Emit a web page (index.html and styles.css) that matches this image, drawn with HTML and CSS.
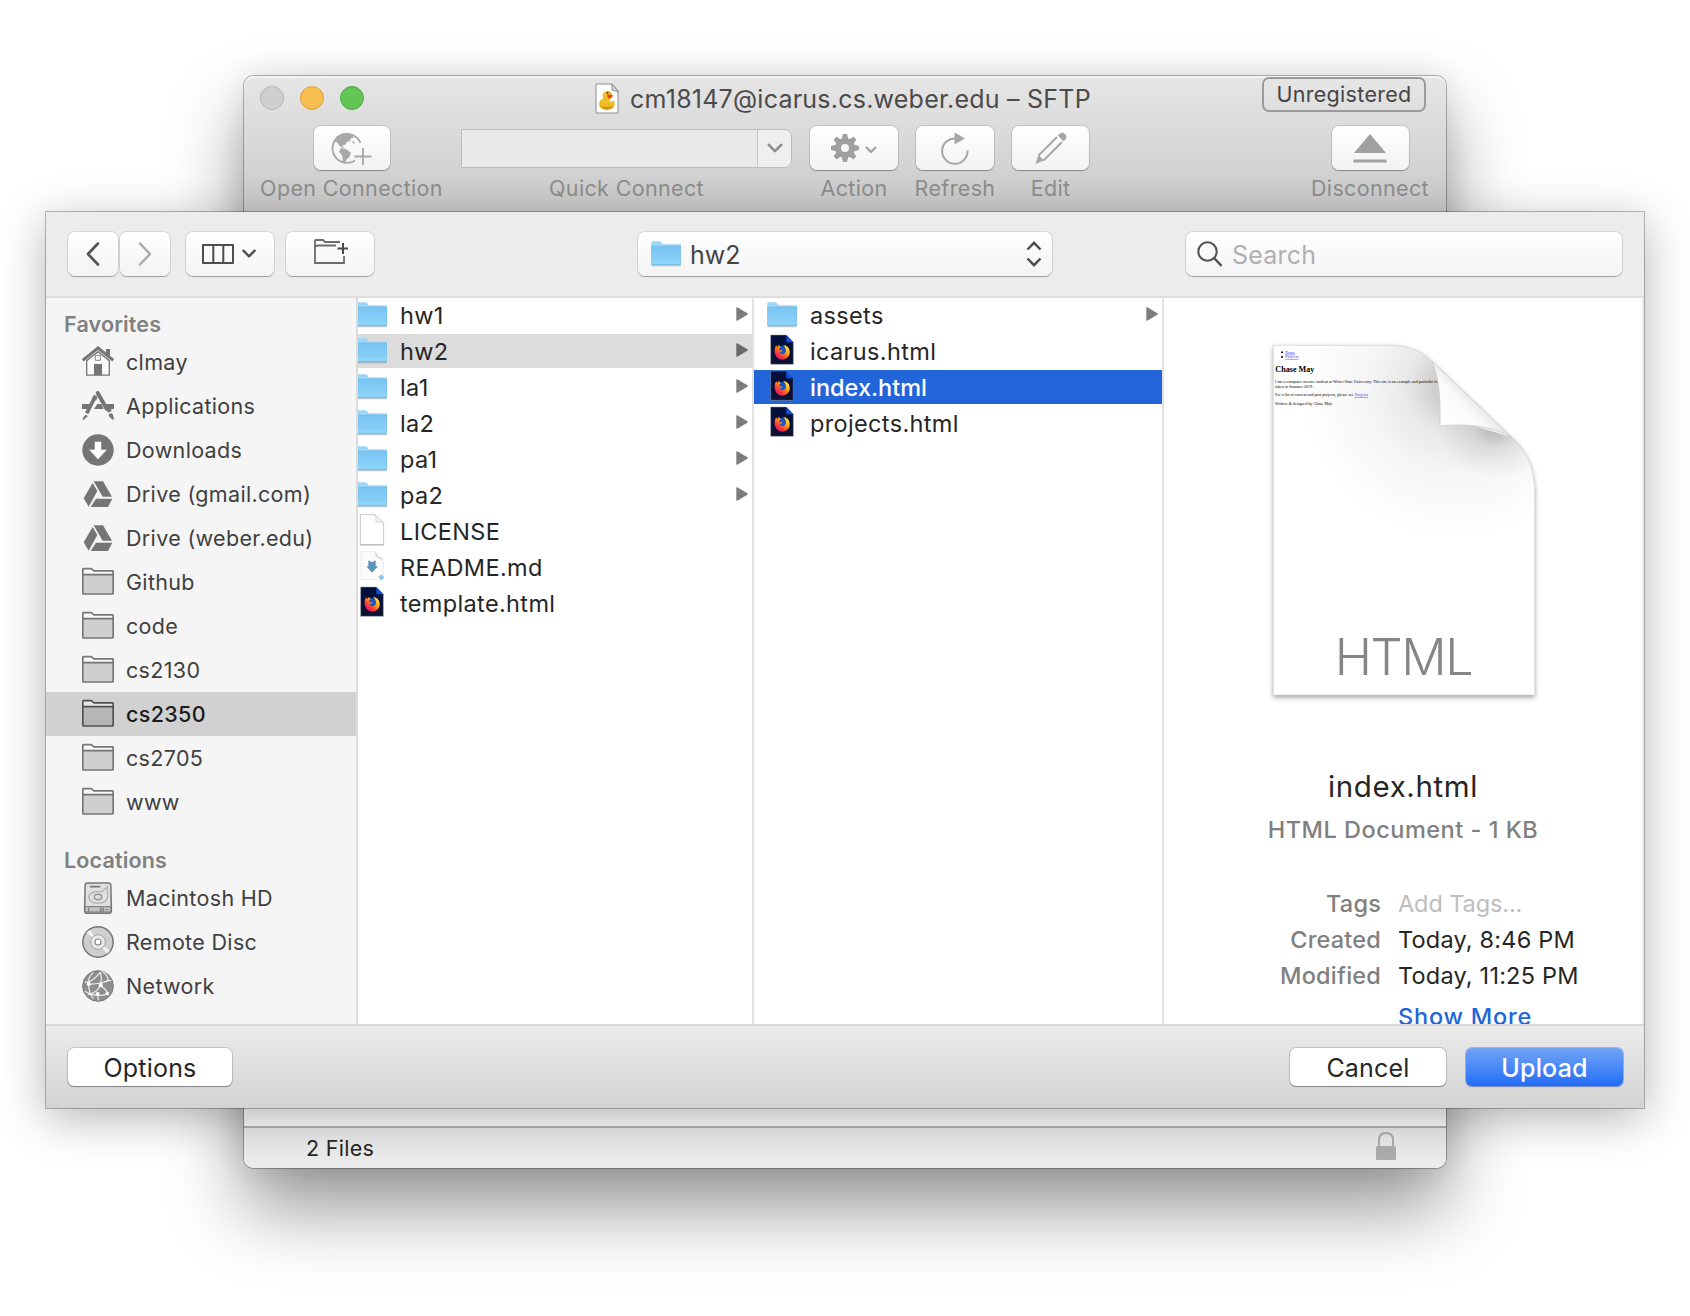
FILE: index.html
```html
<!DOCTYPE html>
<html lang="en">
<head>
<meta charset="utf-8">
<title>SFTP upload</title>
<link rel="stylesheet" href="styles.css">
</head>
<body>
<svg class="defs" width="0" height="0" aria-hidden="true">
  <defs>
    <linearGradient id="gFolder" x1="0" y1="0" x2="0" y2="1"><stop offset="0" stop-color="#79c4f1"/><stop offset="1" stop-color="#8dd3f9"/></linearGradient>
    <linearGradient id="gFox" x1=".9" y1=".1" x2=".2" y2=".9"><stop offset="0" stop-color="#fff04a"/><stop offset=".4" stop-color="#ff9a1c"/><stop offset=".7" stop-color="#ff4330"/><stop offset="1" stop-color="#e3136b"/></linearGradient>
    <linearGradient id="gNavy" x1="0" y1="0" x2="0" y2="1"><stop offset="0" stop-color="#020f3e"/><stop offset="1" stop-color="#0c1230"/></linearGradient>
    <symbol id="folder" viewBox="0 0 90 102">
      <path d="M2 86.500H88" stroke="#000" stroke-opacity=".22" stroke-width="3"/>
      <path d="M1 16q0-3 3-3h22q3 0 4.500 2.500l2.500 4q1.500 2.500 4.500 2.500H87q3 0 3 3v10H1z" fill="#9ad7f8"/>
      <path d="M1 30q0-2 2-2h85q2 0 2 2v51q0 3-3 3H4q-3 0-3-3z" fill="url(#gFolder)"/>
      <path d="M1 27.500H90" stroke="#64afdd" stroke-width="1.500"/>
      <path d="M2 75H89" stroke="#a3ddfb" stroke-width="1.500"/>
      <path d="M1.500 83.500H89.500" stroke="#55a0cc" stroke-width="2"/>
      <path d="M1 25v58M89.500 25v58" stroke="#6fb9e2" stroke-width="1.500"/>
    </symbol>
    <symbol id="firefox" viewBox="0 0 90 102">
      <path d="M11 3h47l21 22v66H11z" fill="url(#gNavy)" stroke="#9a9ca8" stroke-width="1.500"/>
      <path d="M58 3l21 22H60q-2 0-2-2z" fill="#0a52dc"/>
      <circle cx="45" cy="53" r="17" fill="#1c57c8"/>
      <path d="M23 45q1-7 5-11 1 3 3 5 2-4 6-6 0 4 4 7-5 4-4 9 5-2 9 1-3 5-9 5 4 7 12 5 9-3 8-13-1-8-9-14 17 2 20 18 2 14-9 22-13 8-26 0-12-9-10-28z" fill="url(#gFox)"/>
      <path d="M38 43q4-4 9-2l-3 5q-4 3-7 3z" fill="#1c4fb8"/>
    </symbol>
    <symbol id="doc" viewBox="0 0 90 102">
      <path d="M10 1h42l28 27v64H10z" fill="#fff" stroke="#bdbdbd" stroke-width="2.500" stroke-linejoin="round"/>
      <path d="M52 1l28 27q-10-7-23-4 1-14-5-23z" fill="#f6f6f6" stroke="#bdbdbd" stroke-width="1.800"/>
      <path d="M10 93H80" stroke="#aaa" stroke-width="2.500"/>
    </symbol>
    <symbol id="md" viewBox="0 0 90 102">
      <path d="M12 4h40l27 25v60H12z" fill="#fcfcfc" stroke="#e2e2e2" stroke-width="2"/>
      <path d="M52 4l27 25-17-5-8-6z" fill="#ececec"/>
      <path d="M55 9l7 13 16 6" stroke="#bbb" stroke-width="1.500" fill="none"/>
      <path d="M34 31l11 6 11-6v18h7L45 68 28 49h6z" fill="#5b95ba"/>
      <path d="M73 73l9 9-9 9-9-9z" fill="#8fc3ef"/>
    </symbol>
    <symbol id="arrow" viewBox="0 0 36 42"><path d="M1 3q0-3 3-2l30 18q3 2 0 4L4 41q-3 1-3-2z"/></symbol>
    <symbol id="sfolder" viewBox="0 0 96 96">
      <path d="M2 84V10q0-2.500 2.500-2.500H26q2.500 0 4 2l3 4q1.500 2 4 2h55q2.500 0 2.500 2.500V84z" fill="#fff" fill-opacity=".45"/>
      <path d="M2 26H94V84H2z" fill="currentColor" fill-opacity=".32"/>
      <path d="M3 26H93M2.500 82V10q0-2 2-2H27q2 0 3.500 2l3 2.500q1.500 2 3.500 2h54.500q2 0 2 2V82q0 2-2 2h-87q-2 0-2-2z" fill="none" stroke="currentColor" stroke-width="5" stroke-linejoin="round"/>
    </symbol>
    <symbol id="drive" viewBox="0 0 96 96">
      <path d="M35 10H63L90 56H62z M32 15L46 39 20 86 5 61z M42 62H91L78 87H26z" fill="currentColor"/>
    </symbol>
    <symbol id="chev" viewBox="0 0 42 30"><path d="M4 5L21 22 38 5" fill="none" stroke="currentColor" stroke-width="7" stroke-linecap="round" stroke-linejoin="round"/></symbol>
  </defs>
</svg>

<section class="window">
  <header class="titlebar">
    <div class="lights"><i class="light"></i><i class="light amber"></i><i class="light green"></i></div>
    <div class="title">
      <svg width="24" height="31" viewBox="0 0 24 31">
        <path d="M1 1h16l6 7v22H1z" fill="#fdfdfd" stroke="#8e8e8e"/><path d="M17 1l6 7.500-6-1.500z" fill="#ddd" stroke="#777" stroke-width=".8"/>
        <path d="M5 17.500q-2 5 .5 7.500 6 3.500 12 .5 3.500-3 1.500-8-3 2-5 .5 4-3.500 2.500-8-2.500-3.500-6.500-1.500-3.500 2-2 6 .5 1.500-3 3z" fill="#eebc26"/>
        <path d="M6 22.500q6 3 12.500 0-2 4-7 4-4.500-.500-5.500-4z" fill="#d09310"/>
        <path d="M12 12q4-1 6 .5-1 3-5 3z" fill="#e14c1d"/><circle cx="12.500" cy="10" r="1" fill="#4a3210"/>
      </svg>
      <span class="title-text">cm18147@icarus.cs.weber.edu – SFTP</span>
    </div>
    <span class="badge"><span>Unregistered</span></span>
  </header>
  <div class="tools">
    <div class="tool tool-open">
      <span class="tool-btn"><svg width="46" height="36" viewBox="0 0 46 36">
        <path d="M31.500 13A14.500 14.500 0 1 0 26 30.500" fill="none" stroke="#a9a9a9" stroke-width="1.900"/>
        <path d="M8 6q6-4 12-3l-1 2 4 0 2 3-3 0-1 3-3 1-2 3-3 0 2 3q-5-1-7-6-3 0-3-1z M22 11l4 1-1 2z M12 18l5 1 5 4q-1 4-4 6l-2 4-2-1-1-7-3-3z" fill="#a9a9a9"/>
        <path d="M34 18v17M25.500 26.500h17" stroke="#a9a9a9" stroke-width="1.900"/></svg></span>
      <span class="tool-label">Open Connection</span>
    </div>
    <div class="tool tool-quick">
      <span class="combo"><span class="combo-drop"><svg class="ico-mid" width="16" height="11"><use href="#chev"/></svg></span></span>
      <span class="tool-label">Quick Connect</span>
    </div>
    <div class="tool tool-action">
      <span class="tool-btn"><svg width="46" height="30" viewBox="0 0 46 30">
        <g fill="#a0a0a0"><path id="teeth" d="M12 1h4l2 8h-8zM12 29h4l2-8h-8z"/><use href="#teeth" transform="rotate(45 14 15)"/><use href="#teeth" transform="rotate(90 14 15)"/><use href="#teeth" transform="rotate(135 14 15)"/></g>
        <circle cx="14" cy="15" r="7" fill="none" stroke="#a0a0a0" stroke-width="6"/>
        <path d="M35 14l5 5 5-5" fill="none" stroke="#a0a0a0" stroke-width="2.200"/></svg></span>
      <span class="tool-label">Action</span>
    </div>
    <div class="tool tool-refresh">
      <span class="tool-btn"><svg width="30" height="34" viewBox="0 0 30 34">
        <path d="M16 7.500A12.700 12.700 0 1 0 27.500 19.500" fill="none" stroke="#a6a6a6" stroke-width="2"/><path d="M14.500 1.500L25 7.500 14.500 13.500z" fill="#a6a6a6"/></svg></span>
      <span class="tool-label">Refresh</span>
    </div>
    <div class="tool tool-edit">
      <span class="tool-btn"><svg width="34" height="34" viewBox="0 0 34 34">
        <path d="M23 6L4.500 24.500M28 11L9.500 29.500" stroke="#a6a6a6" stroke-width="1.900" fill="none"/>
        <path d="M4.500 24L10 29.500 1.500 33z M24 4.500q3-4.500 7-1.500 3.500 4-1.500 7.500z" fill="#a6a6a6"/></svg></span>
      <span class="tool-label">Edit</span>
    </div>
    <div class="tool tool-disc">
      <span class="tool-btn"><svg width="34" height="30" viewBox="0 0 34 30"><path d="M17 1L33 20H1z M.500 26.500h33v3H.500z" fill="#a0a0a0"/></svg></span>
      <span class="tool-label">Disconnect</span>
    </div>
  </div>
  <footer class="status">
    <span class="status-text">2 Files</span>
    <svg class="lock" width="20" height="28" viewBox="0 0 20 28"><path d="M3 15V8q0-7 7-7t7 7v7" fill="none" stroke="#aeaeae" stroke-width="2"/><rect y="14" width="20" height="14" rx="1.500" fill="#aeaeae"/></svg>
  </footer>
</section>

<section class="sheet">
  <header class="bar">
    <div class="nav">
      <span class="btn"><svg width="14" height="24" viewBox="0 0 14 24"><path d="M12 1.500L2 12l10 10.500" fill="none" stroke="#555" stroke-width="2.700" stroke-linecap="round" stroke-linejoin="round"/></svg></span>
      <span class="btn"><svg width="14" height="24" viewBox="0 0 14 24"><path d="M2 1.500L12 12 2 22.500" fill="none" stroke="#ababab" stroke-width="2.500" stroke-linecap="round" stroke-linejoin="round"/></svg></span>
    </div>
    <span class="btn view-btn"><svg width="32" height="20" viewBox="0 0 32 20"><path d="M1 1h30v18H1zM11.300 1v18M21.300 1v18" fill="none" stroke="#4d4d4d" stroke-width="2" stroke-linejoin="round"/></svg><svg class="ico-dark" width="14" height="10"><use href="#chev"/></svg></span>
    <span class="btn new-btn"><svg width="34" height="25" viewBox="0 0 34 25"><path d="M30 17v7H1V2q0-1 1-1h7l2 2h15M2 8q0-1.500 2-1.500h18" fill="none" stroke="#6b6b6b" stroke-width="1.800"/><path d="M29 4v11M23.500 9.500h11" stroke="#4a4a4a" stroke-width="2"/></svg></span>
    <span class="btn path-btn"><svg width="30" height="34"><use href="#folder"/></svg><span class="path-text">hw2</span><svg class="updown" width="16" height="26" viewBox="0 0 16 26"><path d="M1.500 8.500L8 1.800l6.500 6.700M1.500 17.500L8 24.200l6.500-6.700" fill="none" stroke="#4d4d4d" stroke-width="2.500"/></svg></span>
    <span class="btn search"><svg width="26" height="26" viewBox="0 0 26 26"><circle cx="10.500" cy="10.500" r="9.200" fill="none" stroke="#505050" stroke-width="2"/><path d="M17 17l7.500 7.800" stroke="#505050" stroke-width="2.400"/></svg><span class="search-text">Search</span></span>
  </header>

  <div class="browser">
    <nav class="sidebar">
      <h2>Favorites</h2>
      <ul>
        <li><svg viewBox="0 0 96 96"><path d="M14 44V87.500H82V44L48 17z" fill="#fff" fill-opacity=".5" stroke="currentColor" stroke-width="4"/><path d="M2 43L48 6 94 43" fill="none" stroke="currentColor" stroke-width="9"/><path d="M72 9h12v22l-12-9z M36 54h24v34H36z" fill="currentColor"/><path d="M40 28h15v15H40z" fill="none" stroke="currentColor" stroke-width="2.500"/></svg><span>clmay</span></li>
        <li><svg viewBox="0 0 96 96"><path d="M0 42H24L16 57H0z M46 42h12l7 15H36z M70 42h26v15H80z" fill="currentColor"/><path d="M41 17L14 70" stroke="currentColor" stroke-width="11"/><path d="M47 9L74 56" stroke="currentColor" stroke-width="12" stroke-linecap="round"/><path d="M74 59l11-5 4 9-11 5z M81 72q8-6 12 2 3 8 2 17-7-4-12-9-4-5-2-10z M10 74l8 4-16 14q0-10 8-18z" fill="currentColor"/><circle cx="38" cy="25" r="7" fill="currentColor"/></svg><span>Applications</span></li>
        <li><svg viewBox="0 0 96 96"><circle cx="48" cy="48" r="47" fill="currentColor"/><path d="M37 22H59V46H77L48 77 19 46H37z" fill="#fff" stroke="#6a6a6a" stroke-width="2"/></svg><span>Downloads</span></li>
        <li><svg><use href="#drive"/></svg><span>Drive (gmail.com)</span></li>
        <li><svg><use href="#drive"/></svg><span>Drive (weber.edu)</span></li>
        <li><svg><use href="#sfolder"/></svg><span>Github</span></li>
        <li><svg><use href="#sfolder"/></svg><span>code</span></li>
        <li><svg><use href="#sfolder"/></svg><span>cs2130</span></li>
        <li class="current"><svg><use href="#sfolder"/></svg><span>cs2350</span></li>
        <li><svg><use href="#sfolder"/></svg><span>cs2705</span></li>
        <li><svg><use href="#sfolder"/></svg><span>www</span></li>
      </ul>
      <h2 class="second">Locations</h2>
      <ul>
        <li><svg viewBox="0 0 96 96"><path d="M16 3H80q6 0 6.500 6L88 74v14q0 6-6 6H14q-6 0-6-6V74L9.500 9q.5-6 6.500-6z" fill="#e0e0e0" stroke="currentColor" stroke-width="4.500"/><path d="M9 74H87V90H9z" fill="#c4c4c4" stroke="currentColor" stroke-width="3"/><path d="M24 14H55" stroke="currentColor" stroke-width="5"/><path d="M76 14L60 29Q22 26 20 46q3 18 30 18 27-2 27-21z" fill="none" stroke="#b2b2b2" stroke-width="4"/><ellipse cx="48" cy="45" rx="11" ry="8" fill="none" stroke="#999" stroke-width="4.500"/><path d="M20 77v12M55 77v12M60 77v12M65 77v12M72 83h6" stroke="currentColor" stroke-width="3"/></svg><span>Macintosh HD</span></li>
        <li><svg viewBox="0 0 96 96"><circle cx="48" cy="48" r="45.500" fill="#cfcfcf" stroke="currentColor" stroke-width="4.500"/><path d="M48 48L14 20 24 11zM48 48L84 74 75 83z" fill="#f2f2f2"/><circle cx="48" cy="48" r="22" fill="#e8e8e8" stroke="#999" stroke-width="2.500"/><circle cx="48" cy="48" r="9" fill="#fff" stroke="#8a8a8a" stroke-width="3.500"/></svg><span>Remote Disc</span></li>
        <li><svg viewBox="0 0 96 96"><circle cx="48" cy="48" r="46" fill="#8e8e8e" stroke="#777" stroke-width="3"/><g fill="none" stroke="#f1f1f1" stroke-width="3.500"><path d="M8 35q16 8 47-28M55 6q6 22 0 40-10 24-38 28M20 42Q18 18 34 8M20 42q0 26 14 44M20 42q28 2 68-12M55 46q22 16 24 30M8 64q36 20 68 8M47 72l2 20M60 4q18 10 18 28-20 4-24 16"/></g><g fill="#fff"><circle cx="20" cy="42" r="6"/><circle cx="56" cy="46" r="6"/><circle cx="47" cy="72" r="6"/><circle cx="76" cy="70" r="5"/></g></svg><span>Network</span></li>
      </ul>
    </nav>

    <ul class="col col-a">
      <li><svg class="fi"><use href="#folder"/></svg><span>hw1</span><svg class="ar"><use href="#arrow"/></svg></li>
      <li class="trail"><svg class="fi"><use href="#folder"/></svg><span>hw2</span><svg class="ar"><use href="#arrow"/></svg></li>
      <li><svg class="fi"><use href="#folder"/></svg><span>la1</span><svg class="ar"><use href="#arrow"/></svg></li>
      <li><svg class="fi"><use href="#folder"/></svg><span>la2</span><svg class="ar"><use href="#arrow"/></svg></li>
      <li><svg class="fi"><use href="#folder"/></svg><span>pa1</span><svg class="ar"><use href="#arrow"/></svg></li>
      <li><svg class="fi"><use href="#folder"/></svg><span>pa2</span><svg class="ar"><use href="#arrow"/></svg></li>
      <li><svg class="fi"><use href="#doc"/></svg><span>LICENSE</span></li>
      <li><svg class="fi"><use href="#md"/></svg><span>README.md</span></li>
      <li><svg class="fi"><use href="#firefox"/></svg><span>template.html</span></li>
    </ul>

    <ul class="col col-b">
      <li><svg class="fi"><use href="#folder"/></svg><span>assets</span><svg class="ar"><use href="#arrow"/></svg></li>
      <li><svg class="fi"><use href="#firefox"/></svg><span>icarus.html</span></li>
      <li class="selected"><svg class="fi"><use href="#firefox"/></svg><span>index.html</span></li>
      <li><svg class="fi"><use href="#firefox"/></svg><span>projects.html</span></li>
    </ul>

    <aside class="preview">
      <svg class="page" width="320" height="400" viewBox="0 0 960 1200">
        <defs>
          <radialGradient id="pgShade" gradientUnits="userSpaceOnUse" cx="640" cy="200" r="460"><stop offset="0" stop-color="#c2c2c2"/><stop offset=".15" stop-color="#d2d2d2"/><stop offset=".3" stop-color="#e8e8e8"/><stop offset=".55" stop-color="#f5f5f5"/><stop offset="1" stop-color="#fff"/></radialGradient>
          <linearGradient id="pgCurl" gradientUnits="userSpaceOnUse" x1="610" y1="300" x2="700" y2="215"><stop offset="0" stop-color="#fff"/><stop offset=".6" stop-color="#fafafa"/><stop offset="1" stop-color="#e2e2e2"/></linearGradient>
          <radialGradient id="pgUnder" gradientUnits="userSpaceOnUse" cx="0" cy="0" r="1" gradientTransform="translate(765 325) rotate(14) scale(175 150)"><stop offset="0" stop-color="#000" stop-opacity=".24"/><stop offset=".4" stop-color="#000" stop-opacity=".09"/><stop offset="1" stop-color="#000" stop-opacity="0"/></radialGradient>
          <filter id="pgDrop" x="-10%" y="-10%" width="120%" height="120%"><feDropShadow dx="0" dy="7" stdDeviation="8" flood-color="#000" flood-opacity=".38"/></filter>
        </defs>
        <path d="M100 76H455Q530 76 574 122L815 352Q884 410 884 520V1125H100z" fill="#fff" filter="url(#pgDrop)"/>
        <path d="M100 76H455Q530 76 574 122L815 352Q884 410 884 520V1125H100z" fill="url(#pgShade)" stroke="#cfcfcf" stroke-width="2"/>
        <g class="page-text">
          <circle cx="126" cy="97" r="3"/><circle cx="126" cy="111" r="3"/>
          <text class="lk" x="136" y="101" textLength="30" lengthAdjust="spacingAndGlyphs">Home</text><text class="lk" x="136" y="115" textLength="40" lengthAdjust="spacingAndGlyphs">Projects</text>
          <text class="page-h" x="106" y="155" textLength="117" lengthAdjust="spacingAndGlyphs">Chase May</text>
          <text x="105" y="189" textLength="492" lengthAdjust="spacingAndGlyphs">I am a computer science student at Weber State University. This site is an example and portfolio for</text>
          <text x="105" y="203" textLength="114" lengthAdjust="spacingAndGlyphs">taken in Summer 2019.</text>
          <text x="105" y="229" textLength="236" lengthAdjust="spacingAndGlyphs">For a list of current and past projects, please see</text><text class="lk" x="344" y="229" textLength="40" lengthAdjust="spacingAndGlyphs">Projects</text>
          <text x="105" y="255" textLength="171" lengthAdjust="spacingAndGlyphs">Written &amp; designed by Chase May</text>
        </g>
        <path d="M560 317H700L815 352Q884 410 884 520V560H560z" fill="url(#pgUnder)"/>
        <path d="M574 122L815 352Q740 306 600 317Q604 180 574 122z" fill="url(#pgCurl)" stroke="#c4c4c4" stroke-width="2"/>
        <text class="page-kind" x="284" y="1065" textLength="417">HTML</text>
      </svg>
      <div class="file-name">index.html</div>
      <div class="file-kind">HTML Document - 1 KB</div>
      <dl class="meta">
        <dt>Tags</dt><dd class="muted">Add Tags...</dd>
        <dt>Created</dt><dd>Today, 8:46 PM</dd>
        <dt>Modified</dt><dd>Today, 11:25 PM</dd>
      </dl>
      <div class="more"><span>Show More</span></div>
    </aside>
  </div>

  <footer class="actions">
    <span class="push options"><span>Options</span></span>
    <span class="push cancel"><span>Cancel</span></span>
    <span class="push primary"><span>Upload</span></span>
  </footer>
</section>
</body>
</html>
```
FILE: styles.css
```css
* { box-sizing: border-box; }
body {
  margin: 0;
  position: relative;
  width: 1690px;
  height: 1316px;
  overflow: hidden;
  background: #fff;
  color: #262626;
  font-family: Inter, "Liberation Sans", sans-serif;
}
ul, dl, dd, h2 { margin: 0; padding: 0; list-style: none; }
svg { display: block; flex: none; }
.defs { position: absolute; }

/* Browser window behind the sheet */
.window {
  position: absolute;
  left: 244px;
  top: 76px;
  width: 1202px;
  height: 1092px;
  display: flex;
  flex-direction: column;
  border-radius: 10px;
  overflow: hidden;
  background: linear-gradient(#e6e6e6, #cacaca 136px, #fff 136px);
  box-shadow: inset 0 2px 0 rgba(255,255,255,.55), 0 0 0 1px rgba(0,0,0,.27), 0 40px 76px rgba(0,0,0,.42), 0 0 30px rgba(0,0,0,.1);
}
.titlebar {
  height: 45px;
  display: grid;
  grid-template-columns: 1fr auto 1fr;
  align-items: center;
  padding: 0 20px 0 16px;
}
.lights { display: flex; gap: 16px; margin-top: -1px; }
.light { width: 24px; height: 24px; border-radius: 50%; background: #cfcfcf; border: 1px solid #b4b4b4; }
.light.amber { background: #f6be4f; border-color: #dea13a; }
.light.green { background: #62c655; border-color: #4eaa41; }
.title { display: flex; align-items: center; gap: 11px; }
.title svg { margin-top: -1px; }
.title-text { font-size: 25px; letter-spacing: .23px; color: #4b4b4b; white-space: nowrap; }
.badge {
  justify-self: end;
  align-self: start;
  margin-top: 1px;
  width: 164px;
  height: 35px;
  border: 2px solid #9a9a9a;
  border-radius: 7px;
  font-size: 21.500px;
  letter-spacing: .3px;
  line-height: 31px;
  text-align: center;
  color: #454545;
}
.tools { display: flex; gap: 18px; padding: 5px 16px 0; flex: 1; }
.tool { display: flex; flex-direction: column; align-items: center; }
.tool-btn {
  width: 100%;
  height: 44px;
  display: flex;
  align-items: center;
  justify-content: center;
  border-radius: 7px;
  background: linear-gradient(#fff, #f2f2f2);
  box-shadow: 0 0 0 1px rgba(0,0,0,.1), 0 1px 1px rgba(0,0,0,.28);
}
.tool-label { margin-top: 4px; font-size: 21.500px; letter-spacing: .35px; line-height: 28px; color: #8e8e8e; white-space: nowrap; }
.tool-open { width: 183px; }
.tool-open .tool-btn { width: 76px; }
.tool-quick { width: 331px; }
.tool-action { width: 88px; }
.tool-refresh { width: 78px; }
.tool-edit { width: 77px; }
.tool-disc { width: 120px; margin-left: auto; }
.tool-disc .tool-btn { width: 77px; }
.combo {
  width: 100%;
  height: 39px;
  margin: 3px 0 2px;
  display: flex;
  justify-content: flex-end;
  border: 1px solid #bcbcbc;
  border-radius: 0 8px 8px 0;
  background: #e9e9e9;
}
.combo-drop { width: 34px; display: flex; align-items: center; justify-content: center; border-left: 1px solid #c6c6c6; background: #efefef; border-radius: 0 7px 7px 0; }
.ico-mid { color: #8c8c8c; }
.ico-dark { color: #4d4d4d; }
.status {
  height: 42px;
  display: flex;
  align-items: center;
  justify-content: space-between;
  padding: 0 50px 0 62px;
  border-top: 2px solid #b4b4b4;
  background: #ececec;
}
.status-text { font-size: 21.500px; letter-spacing: .3px; }
.lock { margin-top: -4px; }

/* File picker sheet */
.sheet {
  position: absolute;
  left: 46px;
  top: 212px;
  width: 1598px;
  height: 896px;
  display: flex;
  flex-direction: column;
  background: #ececec;
  box-shadow: 0 0 0 1px rgba(0,0,0,.26), 0 10px 44px rgba(0,0,0,.3);
}
.bar { height: 84px; display: flex; align-items: center; padding: 0 22px; }
.nav { display: flex; gap: 2px; margin-right: 16px; }
.nav .btn { width: 50px; }
.btn {
  height: 44px;
  display: flex;
  align-items: center;
  justify-content: center;
  border-radius: 7px;
  background: linear-gradient(#fff, #f3f3f3);
  box-shadow: 0 0 0 1px rgba(0,0,0,.09), 0 1px 1px rgba(0,0,0,.28);
}
.view-btn { width: 88px; gap: 8px; margin-right: 12px; padding-right: 2px; }
.new-btn { width: 88px; }
.new-btn svg { margin: -5px 0 0 2px; }
.path-btn { width: 414px; margin-left: 264px; padding: 0 10px 0 13px; justify-content: flex-start; }
.path-text { margin: 2px 0 0 9px; font-size: 25px; color: #444; }
.updown { margin-left: auto; }
.search { width: 436px; margin-left: auto; padding: 0 11px; justify-content: flex-start; }
.search-text { margin: 2px 0 0 9px; font-size: 25px; letter-spacing: .2px; color: #b0b0b0; }

.browser { height: 730px; display: flex; border-top: 2px solid #dedede; border-bottom: 2px solid #d6d6d6; background: #fff; overflow: hidden; }
.sidebar { width: 312px; flex: none; background: #f5f5f5; border-right: 2px solid #dcdcdc; }
.sidebar h2 { height: 42px; padding: 12px 0 0 18px; font-size: 21.500px; letter-spacing: .15px; line-height: 28px; font-weight: 600; color: #808080; }
.sidebar h2.second { height: 52px; padding-top: 22px; }
.sidebar li { height: 44px; display: flex; align-items: center; gap: 12px; padding-left: 36px; font-size: 21.500px; letter-spacing: .33px; color: #404040; }
.sidebar li svg { width: 32px; height: 32px; color: #757575; }
.sidebar li.current { background: #d1d1d1; color: #1c1c1c; font-weight: 450; }
.sidebar li.current svg { color: #505050; }
.col { flex: none; border-right: 2px solid #e2e2e2; overflow: hidden; }
.col-a { width: 396px; }
.col-b { width: 410px; }
.col li { height: 34px; margin-bottom: 2px; display: flex; align-items: center; padding: 0 4px 0 13px; font-size: 23.500px; letter-spacing: .35px; }
.col-a li { padding-left: 0; }
.col-a .fi { margin-left: -1px; }
.fi { width: 30px; height: 34px; margin-right: 13px; }
.ar { width: 12px; height: 14px; margin: -2px 0 0 auto; fill: #7d7d7d; }
.trail { background: #dcdcdc; }
.trail .ar { fill: #696969; }
.col li.selected { background: #2265d9; color: #fff; font-weight: 500; letter-spacing: 0; }

.preview { flex: 1; border-right: 2px solid #ececec; white-space: nowrap; }
.page { margin: 22px 0 0 76px; }
.page-text { font: 13.500px "Liberation Serif", serif; }
.page-h { font-size: 25px; font-weight: 700; }
.lk { fill: #3a3af0; text-decoration: underline; text-decoration-color: rgba(60,60,240,.4); }
.page-kind { font-size: 151px; font-weight: 350; fill: #858585; }
.file-name { margin-top: 46px; text-align: center; font-size: 29.500px; letter-spacing: .6px; line-height: 40px; }
.file-kind { margin-top: 7px; text-align: center; font-size: 23.500px; letter-spacing: .5px; line-height: 34px; font-weight: 500; color: #808080; }
.meta { margin-top: 39px; display: grid; grid-template-columns: 217px 1fr; column-gap: 17px; font-size: 23.500px; line-height: 36px; letter-spacing: .2px; }
.meta dt { text-align: right; color: #808080; font-weight: 500; }
.meta .muted { color: #bdbdbd; letter-spacing: -.1px; }
.more { margin: 5px 0 0 234px; font-size: 23.500px; letter-spacing: .8px; line-height: 36px; font-weight: 500; color: #2166d8; }

.actions { flex: 1; display: flex; align-items: center; gap: 20px; padding: 0 21px 0 22px; background: linear-gradient(#ebebeb, #d3d3d3); }
.push {
  height: 38px;
  display: flex;
  align-items: center;
  justify-content: center;
  padding-top: 1px;
  border-radius: 6px;
  background: #fff;
  font-size: 25px;
  letter-spacing: .2px;
  box-shadow: 0 0 0 1px rgba(0,0,0,.14), 0 1px 1px rgba(0,0,0,.3);
}
.options { width: 164px; margin-right: auto; }
.cancel { width: 156px; }
.primary { width: 157px; background: linear-gradient(#72a3f5, #4687f7 55%, #236bf8); color: #fff; font-weight: 500; box-shadow: 0 0 0 1px rgba(30,90,220,.35), 0 1px 1px rgba(0,0,0,.25); }
```
